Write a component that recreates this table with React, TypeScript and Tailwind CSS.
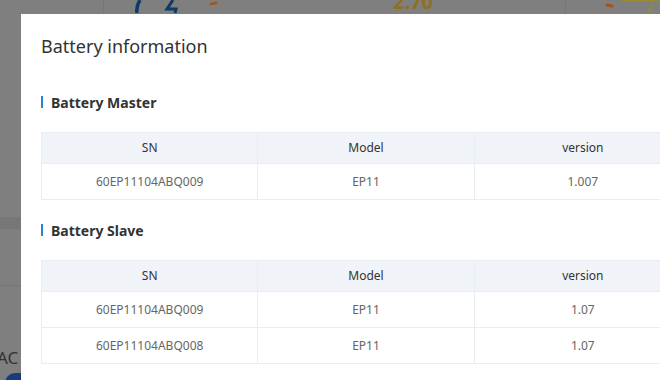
import React from "react";

type Row = { sn: string; model: string; version: string };

const master: Row[] = [{ sn: "60EP11104ABQ009", model: "EP11", version: "1.007" }];
const slave: Row[] = [
  { sn: "60EP11104ABQ009", model: "EP11", version: "1.07" },
  { sn: "60EP11104ABQ008", model: "EP11", version: "1.07" },
];

const SectionTitle: React.FC<{ label: string }> = ({ label }) => (
  <div className="flex items-center h-[20px] gap-[8px]">
    <span className="w-[2px] h-[12px] bg-[#2f80d1]" />
    <span className="text-[14px] font-bold text-[#333]">{label}</span>
  </div>
);

const InfoTable: React.FC<{ rows: Row[] }> = ({ rows }) => (
  <div className="w-[651px] border border-[#e8ecf3] text-[12px]">
    <div className="grid grid-cols-3 h-[30px] bg-[#f0f4f9] text-[#333]">
      <div className="flex items-center justify-center border-r border-[#e8ecf3]">SN</div>
      <div className="flex items-center justify-center border-r border-[#e8ecf3]">Model</div>
      <div className="flex items-center justify-center">version</div>
    </div>
    {rows.map((r, i) => (
      <div key={i} className="grid grid-cols-3 h-[36px] border-t border-[#e8ecf3] text-[#666]">
        <div className="flex items-center justify-center border-r border-[#e8ecf3]">{r.sn}</div>
        <div className="flex items-center justify-center border-r border-[#e8ecf3]">{r.model}</div>
        <div className="flex items-center justify-center">{r.version}</div>
      </div>
    ))}
  </div>
);

export default function App() {
  return (
    <div
      className="relative w-[660px] h-[380px] overflow-hidden bg-[#7f7f7f]"
      style={{ fontFamily: '"Noto Sans", "Open Sans", sans-serif' }}
    >
      {/* dimmed page behind the dialog */}
      <div className="absolute left-[103px] top-0 w-px h-[14px] bg-[#777]" />
      <div className="absolute left-[565px] top-0 w-px h-[14px] bg-[#777]" />
      <div className="absolute left-0 top-[217px] w-[21px] h-[12px] bg-[#777]" />
      <div className="absolute left-0 top-[285px] w-[21px] h-px bg-[#767676]" />
      <svg className="absolute left-[130px] top-0" width="100" height="14" viewBox="0 0 100 14">
        <path d="M10 0 Q6 6 7 13" stroke="#0d3a66" strokeWidth="3.5" fill="none" />
        <path d="M43 0 L37 9 L46 9 L45 13" stroke="#0d3a66" strokeWidth="3" fill="none" />
        <path d="M81 4 L86 3" stroke="#a0561a" strokeWidth="2.5" strokeLinecap="round" />
      </svg>
      <div className="absolute left-[393px] top-[-8px] text-[20px] font-bold text-[#8f6f22] leading-[20px]">
        2.70
      </div>
      <svg className="absolute left-[600px] top-0" width="60" height="14" viewBox="0 0 60 14">
        <path d="M7 5 L12 6" stroke="#a0561a" strokeWidth="3" strokeLinecap="round" />
        <path d="M48 13 L52 6" stroke="#9a8a30" strokeWidth="2" />
        <path d="M22 0 L58 0" stroke="#9a8a30" strokeWidth="3" />
      </svg>
      <div className="absolute left-[-3px] top-[349px] text-[17px] text-[#333] leading-[17px]">AC</div>
      <div className="absolute left-[5px] top-[373px] w-[40px] h-[20px] rounded-full bg-[#1f3a7a]" />

      {/* dialog */}
      <div className="absolute left-[21px] top-[14px] w-[700px] h-[400px] bg-white pl-[20px] pt-[20px] flex flex-col">
        <div className="h-[24px] leading-[24px] text-[18px] text-[#333]">Battery information</div>
        <div className="mt-[34px] flex flex-col gap-[20px]">
          <SectionTitle label="Battery Master" />
          <InfoTable rows={master} />
          <SectionTitle label="Battery Slave" />
          <InfoTable rows={slave} />
        </div>
      </div>
    </div>
  );
}
